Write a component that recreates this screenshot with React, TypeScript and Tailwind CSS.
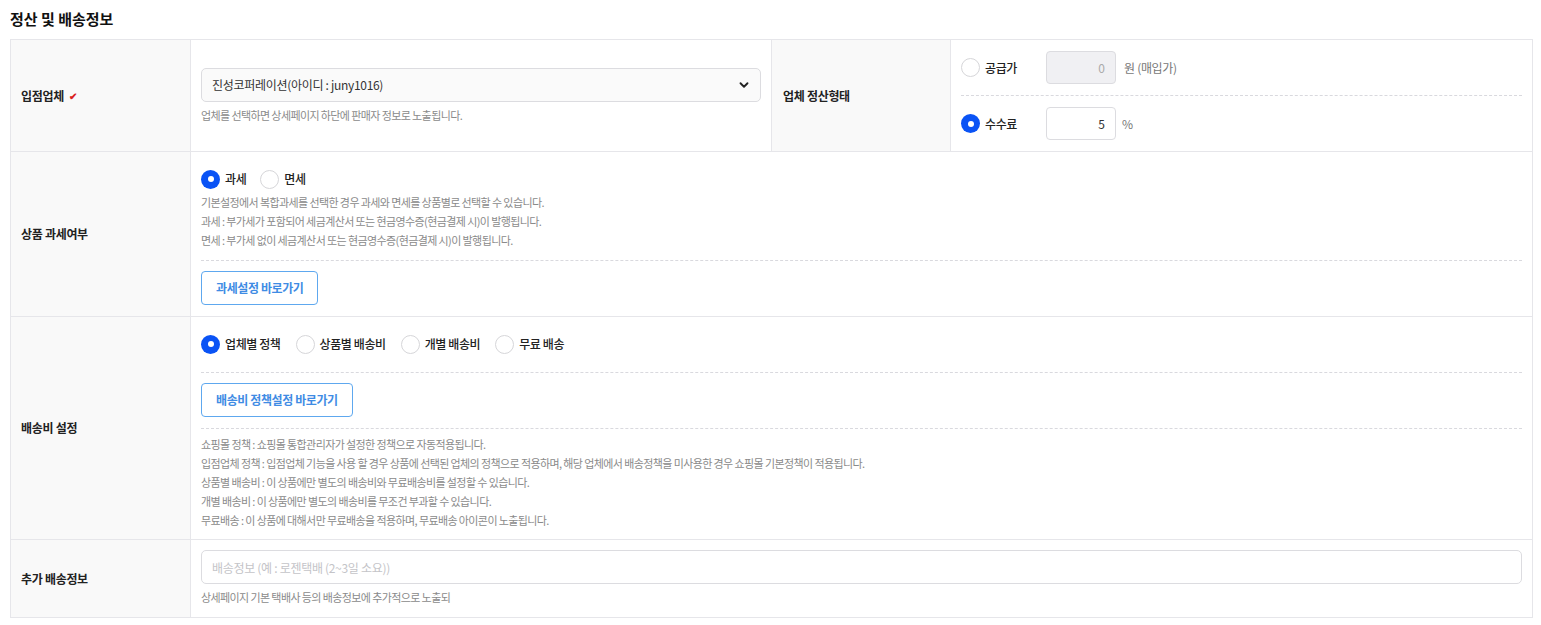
import { ChevronDown } from "lucide-react";

const font = { fontFamily: '"Noto Sans CJK KR", "Noto Sans", sans-serif' };

function Radio({ checked, label }: { checked?: boolean; label: string }) {
  return (
    <label className="flex items-center gap-[5px]">
      {checked ? (
        <span className="flex h-[19px] w-[19px] items-center justify-center rounded-full bg-[#0a53f5]">
          <span className="h-[6px] w-[6px] rounded-full bg-white" />
        </span>
      ) : (
        <span className="h-[19px] w-[19px] rounded-full border border-[#d6d6d9] bg-white" />
      )}
      <span className="text-[12px] font-medium tracking-[-0.4px] text-[#222]">{label}</span>
    </label>
  );
}

function Label({ children }: { children: React.ReactNode }) {
  return (
    <div className="flex w-[179px] shrink-0 items-center bg-[#f9f9f9] px-[10px] text-[12px] font-bold tracking-[-0.3px] text-[#222]">
      {children}
    </div>
  );
}

function Dashed({ className = "" }: { className?: string }) {
  return <div className={"border-t border-dashed border-[#d9d9de] " + className} />;
}

function LinkButton({ children }: { children: React.ReactNode }) {
  return (
    <button className="h-[34px] rounded-[4px] border border-[#5ea8ef] bg-white px-[14px] text-[12px] font-bold tracking-[-0.4px] text-[#3f8ce4]">
      {children}
    </button>
  );
}

export default function App() {
  const shipHelp = [
    "쇼핑몰 정책 : 쇼핑몰 통합관리자가 설정한 정책으로 자동적용됩니다.",
    "입점업체 정책 : 입점업체 기능을 사용 할 경우 상품에 선택된 업체의 정책으로 적용하며, 해당 업체에서 배송정책을 미사용한 경우 쇼핑몰 기본정책이 적용됩니다.",
    "상품별 배송비 : 이 상품에만 별도의 배송비와 무료배송비를 설정할 수 있습니다.",
    "개별 배송비 : 이 상품에만 별도의 배송비를 무조건 부과할 수 있습니다.",
    "무료배송 : 이 상품에 대해서만 무료배송을 적용하며, 무료배송 아이콘이 노출됩니다.",
  ];

  return (
    <div className="min-h-screen bg-white pl-[10px] pr-[8px]" style={font}>
      <div className="flex h-[39px] items-center">
        <h2 className="text-[15px] font-bold text-[#111]">정산 및 배송정보</h2>
      </div>

      <div className="border border-[#e6e6ea]">
        {/* 입점업체 / 정산형태 */}
        <div className="flex border-b border-[#e6e6ea]">
          <Label>
            입점업체 <span className="ml-[5px] text-[10px] text-[#d9231e]">✔</span>
          </Label>
          <div className="flex w-[581px] flex-col justify-center border-l border-[#e6e6ea] px-[10px]">
            <div className="flex h-[34px] items-center justify-between rounded-[5px] border border-[#dcdce0] bg-[#fafafa] pl-[10px] pr-[9px]">
              <span className="text-[12px] tracking-[-0.3px] text-[#333]">진성코퍼레이션(아이디 : juny1016)</span>
              <ChevronDown size={14} strokeWidth={3.2} className="text-[#222]" />
            </div>
            <p className="mt-[5px] text-[11px] leading-[16px] tracking-[-0.6px] text-[#8a8a8a]">
              업체를 선택하면 상세페이지 하단에 판매자 정보로 노출됩니다.
            </p>
          </div>
          <div className="flex w-[179px] shrink-0 items-center border-l border-[#e6e6ea] bg-[#f9f9f9] px-[11px] text-[12px] font-bold tracking-[-0.3px] text-[#222]">
            업체 정산형태
          </div>
          <div className="flex-1 border-l border-[#e6e6ea] px-[10px] py-[11px]">
            <div className="flex items-center">
              <div className="w-[85px]">
                <Radio label="공급가" />
              </div>
              <div className="flex h-[33px] w-[70px] items-center justify-end rounded-[4px] border border-[#dcdce0] bg-[#f0f0f3] px-[10px] text-[12px] text-[#aaa]">
                0
              </div>
              <span className="ml-[8px] text-[12px] tracking-[-0.3px] text-[#777]">원 (매입가)</span>
            </div>
            <Dashed className="my-[11px]" />
            <div className="flex items-center">
              <div className="w-[85px]">
                <Radio checked label="수수료" />
              </div>
              <div className="flex h-[33px] w-[70px] items-center justify-end rounded-[4px] border border-[#dcdce0] bg-white px-[10px] text-[12px] text-[#333]">
                5
              </div>
              <span className="ml-[6px] text-[12px] text-[#777]">%</span>
            </div>
          </div>
        </div>

        {/* 상품 과세여부 */}
        <div className="flex border-b border-[#e6e6ea]">
          <Label>상품 과세여부</Label>
          <div className="flex-1 border-l border-[#e6e6ea] px-[10px] pb-[11px] pt-[13px]">
            <div className="flex h-[28px] items-center gap-[14px]">
              <Radio checked label="과세" />
              <Radio label="면세" />
            </div>
            <div className="text-[11px] leading-[19px] tracking-[-0.6px] text-[#8a8a8a]">
              <p>기본설정에서 복합과세를 선택한 경우 과세와 면세를 상품별로 선택할 수 있습니다.</p>
              <p>과세 : 부가세가 포함되어 세금계산서 또는 현금영수증(현금결제 시)이 발행됩니다.</p>
              <p>면세 : 부가세 없이 세금계산서 또는 현금영수증(현금결제 시)이 발행됩니다.</p>
            </div>
            <Dashed className="mb-[10px] mt-[10px]" />
            <LinkButton>과세설정 바로가기</LinkButton>
          </div>
        </div>

        {/* 배송비 설정 */}
        <div className="flex border-b border-[#e6e6ea]">
          <Label>배송비 설정</Label>
          <div className="flex-1 border-l border-[#e6e6ea] px-[10px] pb-[9px] pt-[13px]">
            <div className="flex h-[28px] items-center gap-[15px]">
              <Radio checked label="업체별 정책" />
              <Radio label="상품별 배송비" />
              <Radio label="개별 배송비" />
              <Radio label="무료 배송" />
            </div>
            <Dashed className="mb-[10px] mt-[14px]" />
            <LinkButton>배송비 정책설정 바로가기</LinkButton>
            <Dashed className="mb-[6px] mt-[11px]" />
            <div className="text-[11px] leading-[19px] tracking-[-0.6px] text-[#8a8a8a]">
              {shipHelp.map((t) => (
                <p key={t}>{t}</p>
              ))}
            </div>
          </div>
        </div>

        {/* 추가 배송정보 */}
        <div className="flex">
          <Label>추가 배송정보</Label>
          <div className="flex-1 border-l border-[#e6e6ea] px-[10px] pb-[12px] pt-[10px]">
            <input
              className="h-[34px] w-full rounded-[5px] border border-[#dcdce0] px-[10px] text-[12px] tracking-[-0.3px] outline-none placeholder:text-[#c4c4c8]"
              placeholder="배송정보 (예 : 로젠택배 (2~3일 소요))"
            />
            <p className="mt-[5px] text-[11px] leading-[16px] tracking-[-0.6px] text-[#8a8a8a]">
              상세페이지 기본 택배사 등의 배송정보에 추가적으로 노출되
            </p>
          </div>
        </div>
      </div>
    </div>
  );
}
